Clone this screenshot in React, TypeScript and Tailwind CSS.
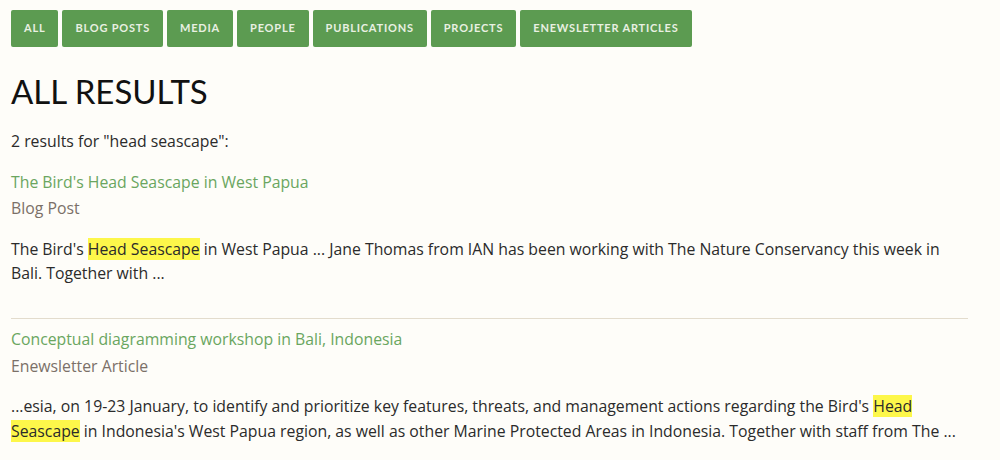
import React from "react";

const tabs = ["ALL", "BLOG POSTS", "MEDIA", "PEOPLE", "PUBLICATIONS", "PROJECTS", "ENEWSLETTER ARTICLES"];

function Hl({ children }: { children: React.ReactNode }) {
  return <span className="bg-[#fdf74a]">{children}</span>;
}

export default function App() {
  return (
    <div className="min-h-[460px] w-[1000px] bg-[#fefdf9] text-[#2b2b2b]" style={{ fontFamily: "'Open Sans', sans-serif" }}>
      <div className="pl-[11px] pt-[10px] w-[968px]">
        <div className="flex gap-[4px]">
          {tabs.map((t) => (
            <div
              key={t}
              className="h-[37px] px-[13px] flex items-center rounded-[2px] bg-[#5c9b51] text-[#e9f0e2] text-[11px] font-bold tracking-[0.8px]"
              style={{ fontFamily: "Lato, sans-serif" }}
            >
              {t}
            </div>
          ))}
        </div>
        <h1 className="mt-[22px] text-[33px] leading-[44px] text-[#111]" style={{ fontFamily: "Lato, sans-serif" }}>
          ALL RESULTS
        </h1>
        <p className="mt-[16px] text-[15.8px] leading-[24px]">2 results for "head seascape":</p>
        <div className="mt-[17px] text-[15.8px]">
          <a className="block leading-[24px] text-[#6aa660]">The Bird's Head Seascape in West Papua</a>
          <div className="mt-[2px] leading-[24px] text-[#7b7068]">Blog Post</div>
          <p className="mt-[17px] leading-[24px]">
            The Bird's <Hl>Head Seascape</Hl> in West Papua ... Jane Thomas from IAN has been working with The Nature Conservancy this week in Bali. Together with ...
          </p>
        </div>
        <div className="mt-[33px] border-t border-[#e3dccd]" />
        <div className="mt-[8px] text-[15.8px]">
          <a className="block leading-[24px] text-[#6aa660]">Conceptual diagramming workshop in Bali, Indonesia</a>
          <div className="mt-[3px] leading-[24px] text-[#7b7068]">Enewsletter Article</div>
          <p className="mt-[16px] leading-[25px]">
            ...esia, on 19-23 January, to identify and prioritize key features, threats, and management actions regarding the Bird's <Hl>Head Seascape</Hl> in Indonesia's West Papua region, as well as other Marine Protected Areas in Indonesia. Together with staff from The ...
          </p>
        </div>
      </div>
    </div>
  );
}
